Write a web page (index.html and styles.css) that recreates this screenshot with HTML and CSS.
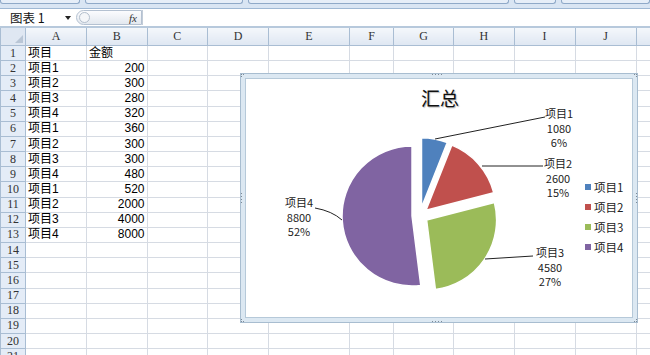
FILE: index.html
```html
<!DOCTYPE html>
<html lang="zh-CN">
<head>
<meta charset="utf-8">
<title>图表</title>
<link rel="stylesheet" href="styles.css">
</head>
<body>
<div class="ribbon">
  <div class="rbtn w80"></div>
  <div class="rbtn w158"></div>
  <div class="rbtn w261"></div>
  <div class="rbtn w42"></div>
  <div class="rbtn grow"></div>
</div>
<div class="formula-bar">
  <div class="namebox"><span class="name">图表 1</span><span class="caret"></span></div>
  <div class="fx-wrap"><span class="knob"></span><span class="fx">fx</span></div>
  <div class="formula-input"></div>
</div>
<div class="sheet-area">
<table class="sheet">
  <colgroup>
    <col class="c-rh"><col class="c-a"><col class="c-b"><col class="c-c"><col class="c-d"><col class="c-e"><col class="c-f"><col class="c-g"><col class="c-h"><col class="c-i"><col class="c-j"><col class="c-k">
  </colgroup>
  <thead>
    <tr><th class="corner"></th><th>A</th><th>B</th><th>C</th><th>D</th><th>E</th><th>F</th><th>G</th><th>H</th><th>I</th><th>J</th><th></th></tr>
  </thead>
  <tbody>
    <tr><th>1</th><td>项目</td><td>金额</td><td></td><td></td><td></td><td></td><td></td><td></td><td></td><td></td><td></td></tr>
    <tr><th>2</th><td>项目1</td><td class="num">200</td><td></td><td></td><td></td><td></td><td></td><td></td><td></td><td></td><td></td></tr>
    <tr><th>3</th><td>项目2</td><td class="num">300</td><td></td><td></td><td></td><td></td><td></td><td></td><td></td><td></td><td></td></tr>
    <tr><th>4</th><td>项目3</td><td class="num">280</td><td></td><td></td><td></td><td></td><td></td><td></td><td></td><td></td><td></td></tr>
    <tr><th>5</th><td>项目4</td><td class="num">320</td><td></td><td></td><td></td><td></td><td></td><td></td><td></td><td></td><td></td></tr>
    <tr><th>6</th><td>项目1</td><td class="num">360</td><td></td><td></td><td></td><td></td><td></td><td></td><td></td><td></td><td></td></tr>
    <tr><th>7</th><td>项目2</td><td class="num">300</td><td></td><td></td><td></td><td></td><td></td><td></td><td></td><td></td><td></td></tr>
    <tr><th>8</th><td>项目3</td><td class="num">300</td><td></td><td></td><td></td><td></td><td></td><td></td><td></td><td></td><td></td></tr>
    <tr><th>9</th><td>项目4</td><td class="num">480</td><td></td><td></td><td></td><td></td><td></td><td></td><td></td><td></td><td></td></tr>
    <tr><th>10</th><td>项目1</td><td class="num">520</td><td></td><td></td><td></td><td></td><td></td><td></td><td></td><td></td><td></td></tr>
    <tr><th>11</th><td>项目2</td><td class="num">2000</td><td></td><td></td><td></td><td></td><td></td><td></td><td></td><td></td><td></td></tr>
    <tr><th>12</th><td>项目3</td><td class="num">4000</td><td></td><td></td><td></td><td></td><td></td><td></td><td></td><td></td><td></td></tr>
    <tr><th>13</th><td>项目4</td><td class="num">8000</td><td></td><td></td><td></td><td></td><td></td><td></td><td></td><td></td><td></td></tr>
    <tr><th>14</th><td></td><td></td><td></td><td></td><td></td><td></td><td></td><td></td><td></td><td></td><td></td></tr>
    <tr><th>15</th><td></td><td></td><td></td><td></td><td></td><td></td><td></td><td></td><td></td><td></td><td></td></tr>
    <tr><th>16</th><td></td><td></td><td></td><td></td><td></td><td></td><td></td><td></td><td></td><td></td><td></td></tr>
    <tr><th>17</th><td></td><td></td><td></td><td></td><td></td><td></td><td></td><td></td><td></td><td></td><td></td></tr>
    <tr><th>18</th><td></td><td></td><td></td><td></td><td></td><td></td><td></td><td></td><td></td><td></td><td></td></tr>
    <tr><th>19</th><td></td><td></td><td></td><td></td><td></td><td></td><td></td><td></td><td></td><td></td><td></td></tr>
    <tr><th>20</th><td></td><td></td><td></td><td></td><td></td><td></td><td></td><td></td><td></td><td></td><td></td></tr>
    <tr><th>21</th><td></td><td></td><td></td><td></td><td></td><td></td><td></td><td></td><td></td><td></td><td></td></tr>
  </tbody>
</table>

<div class="chart">
  <div class="plot">
    <div class="title">汇总</div>
  </div>
  <svg class="chart-svg" width="398" height="250" viewBox="0 0 398 250">
    <g stroke="#fff" stroke-width="1.5" stroke-linejoin="round">
      <path fill="#4f81bd" d="M181.5,134.64 L181.5,64.64 A70,70 0 0 1 207.27,69.55 Z"/>
      <path fill="#c0504d" d="M186,137.21 L211.77,72.12 A70,70 0 0 1 253.8,119.8 Z"/>
      <path fill="#9bbb59" d="M186.62,147 L254.42,129.59 A70,70 0 0 1 195.39,216.45 Z"/>
      <path fill="#8064a2" d="M172.02,143 L180.79,212.45 A70,70 0 1 1 172.02,73 Z"/>
    </g>
    <g stroke="#222" stroke-width="1" fill="none">
      <path d="M195,66 L305,44"/>
      <path d="M242,93 L303,93"/>
      <path d="M245,186 L293,183"/>
      <path d="M102,147 Q92,138 75,135"/>
    </g>
    <g fill="#7d8a97">
      <rect x="192" y="1" width="1" height="1"/><rect x="195" y="1" width="1" height="1"/><rect x="198" y="1" width="1" height="1"/><rect x="201" y="1" width="1" height="1"/>
      <rect x="192" y="248" width="1" height="1"/><rect x="195" y="248" width="1" height="1"/><rect x="198" y="248" width="1" height="1"/><rect x="201" y="248" width="1" height="1"/>
      <rect x="1" y="120" width="1" height="1"/><rect x="1" y="123" width="1" height="1"/><rect x="1" y="126" width="1" height="1"/><rect x="1" y="129" width="1" height="1"/>
      <rect x="396" y="120" width="1" height="1"/><rect x="396" y="123" width="1" height="1"/><rect x="396" y="126" width="1" height="1"/><rect x="396" y="129" width="1" height="1"/>
      <rect x="1" y="1" width="1" height="1"/><rect x="3" y="1" width="1" height="1"/><rect x="1" y="3" width="1" height="1"/>
      <rect x="396" y="1" width="1" height="1"/><rect x="394" y="1" width="1" height="1"/><rect x="396" y="3" width="1" height="1"/>
      <rect x="1" y="248" width="1" height="1"/><rect x="3" y="248" width="1" height="1"/><rect x="1" y="246" width="1" height="1"/>
      <rect x="396" y="248" width="1" height="1"/><rect x="394" y="248" width="1" height="1"/><rect x="396" y="246" width="1" height="1"/>
    </g>
  </svg>
  <div class="dlabel l1">项目1<br>1080<br>6%</div>
  <div class="dlabel l2">项目2<br>2600<br>15%</div>
  <div class="dlabel l3">项目3<br>4580<br>27%</div>
  <div class="dlabel l4">项目4<br>8800<br>52%</div>
  <ul class="legend">
    <li><span class="sw s1"></span>项目1</li>
    <li><span class="sw s2"></span>项目2</li>
    <li><span class="sw s3"></span>项目3</li>
    <li><span class="sw s4"></span>项目4</li>
  </ul>
</div>
</div>
</body>
</html>
```

FILE: styles.css
```css
html, body {
  margin: 0;
  padding: 0;
  overflow: hidden;
  width: 650px;
  height: 355px;
  background: #fff;
  font-family: "Liberation Sans", "Noto Sans CJK SC", sans-serif;
}

.ribbon {
  display: flex;
  height: 4px;
  padding-bottom: 4px;
  background: #d9e5f3;
  border-bottom: 1px solid #9fb8d4;
}
.rbtn {
  height: 3px;
  margin-right: 5px;
  background: #e6eef8;
  border: 1px solid #8fa9c8;
  border-top: none;
  border-radius: 0 0 3px 3px;
}
.w80 { width: 78px; }
.w158 { width: 156px; }
.w261 { width: 259px; }
.w42 { width: 40px; }
.grow { flex: 1; margin-right: 0; }

.formula-bar {
  display: flex;
  align-items: center;
  height: 17px;
  padding: 0;
  background: #fff;
  border-bottom: 2px solid #b7c9dc;
}
.namebox {
  width: 76px;
  box-sizing: border-box;
  display: flex;
  align-items: center;
  justify-content: space-between;
  padding: 0 5px 0 10px;
  font-family: "Noto Sans CJK SC", sans-serif;
  font-size: 12.5px;
  line-height: 16px;
  color: #111;
}
.caret {
  width: 0;
  height: 0;
  border-left: 3px solid transparent;
  border-right: 3px solid transparent;
  border-top: 4px solid #222;
}
.fx-wrap {
  width: 66px;
  height: 15px;
  box-sizing: border-box;
  display: flex;
  align-items: center;
  justify-content: space-between;
  padding: 0 4px 0 2px;
  border: 1px solid #b4c1d1;
  border-radius: 8px 0 0 8px;
  background: linear-gradient(#fbfcfe, #e3e8ef);
}
.knob {
  width: 9px;
  height: 9px;
  border-radius: 50%;
  border: 1px solid #b3bfcd;
  background: #f4f6f9;
}
.fx {
  font-family: "Liberation Serif", serif;
  font-style: italic;
  font-size: 11px;
  color: #333;
}
.formula-input {
  flex: 1;
  height: 15px;
  border-left: 1px solid #c2ccd8;
}

.sheet-area {
  position: relative;
}
.sheet {
  table-layout: fixed;
  border-collapse: collapse;
  width: 675.5px;
  font-size: 12px;
}
.c-rh { width: 25px; }
.c-a { width: 61px; }
.c-b { width: 60.5px; }
.c-c { width: 60.5px; }
.c-d { width: 61px; }
.c-e { width: 81px; }
.c-f { width: 44px; }
.c-g { width: 60px; }
.c-h { width: 60.5px; }
.c-i { width: 61px; }
.c-j { width: 61px; }
.c-k { width: 40px; }

.sheet thead th {
  height: 17px;
  padding: 0;
  font-family: "Liberation Serif", serif;
  font-weight: normal;
  font-size: 12px;
  color: #333;
  background: linear-gradient(#f4f7fb, #dfe7f2);
  border: 1px solid #a9bdd3;
  border-top: none;
}
.sheet thead th.corner {
  position: relative;
  background: #dfe7f2;
}
.corner::after {
  content: "";
  position: absolute;
  right: 2px;
  bottom: 2px;
  width: 0;
  height: 0;
  border-left: 8px solid transparent;
  border-bottom: 8px solid #b9c6d6;
}
.sheet tbody tr {
  height: 15.16px;
}
.sheet tbody th {
  padding: 0;
  font-family: "Liberation Serif", serif;
  font-weight: normal;
  font-size: 12px;
  line-height: 13px;
  color: #333;
  background: #e4ecf7;
  border: 1px solid #a9bdd3;
  text-align: center;
}
.sheet td {
  padding: 0 2px;
  line-height: 13px;
  font-family: "Liberation Sans", "Noto Sans CJK SC", sans-serif;
  font-size: 12px;
  color: #000;
  border: 1px solid #d6dbe3;
  white-space: nowrap;
  overflow: hidden;
}
.sheet td.num {
  text-align: right;
}

.chart {
  position: absolute;
  left: 240px;
  top: 45px;
  width: 398px;
  height: 250px;
  box-sizing: border-box;
  padding: 4px;
  border: 1px solid #a8bdd0;
  background: #dce8f2;
}
.plot {
  height: 100%;
  box-sizing: border-box;
  border: 1px solid #b6c9d9;
  background: #fff;
}
.title {
  margin: 6px 0 0 0;
  padding-left: 0;
  width: 388px;
  text-align: center;
  font-family: "Noto Sans CJK SC", sans-serif;
  font-size: 19px;
  line-height: 26px;
  color: #111;
  text-shadow: 1px 1px 1px #bbb;
}
.chart-svg {
  position: absolute;
  left: -1px;
  top: -1px;
}
.dlabel {
  position: absolute;
  transform: translateX(-50%);
  text-align: center;
  white-space: nowrap;
  font-family: "Noto Sans CJK SC", sans-serif;
  font-size: 11px;
  line-height: 14.5px;
  color: #222;
}
.l1 { left: 318px; top: 32px; }
.l2 { left: 317px; top: 82px; }
.l3 { left: 309px; top: 171px; }
.l4 { left: 58px; top: 121px; }

.legend {
  position: absolute;
  left: 344px;
  top: 103px;
  margin: 0;
  padding: 0;
  list-style: none;
  display: flex;
  flex-direction: column;
  font-family: "Noto Sans CJK SC", sans-serif;
  font-size: 11.5px;
  color: #222;
}
.legend li {
  display: flex;
  align-items: center;
  gap: 3px;
  height: 20px;
}
.sw {
  width: 6px;
  height: 6px;
}
.s1 { background: #4f81bd; }
.s2 { background: #c0504d; }
.s3 { background: #9bbb59; }
.s4 { background: #8064a2; }
```
